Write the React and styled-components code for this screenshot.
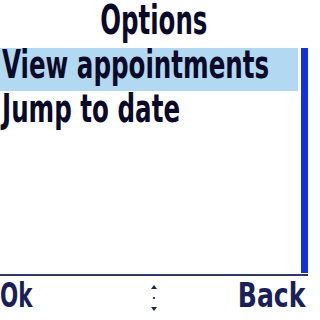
import React from 'react';
import styled, { createGlobalStyle } from 'styled-components';

const GlobalStyle = createGlobalStyle`
  html, body {
    margin: 0;
    padding: 0;
    background: #ffffff;
  }
`

const Screen = styled.div`
  width: 308px;
  height: 320px;
  display: flex;
  flex-direction: column;
  background: #ffffff;
  color: #0a0a28;
  font-family: "DejaVu Sans Condensed", "DejaVu Sans", sans-serif;
  font-weight: bold;
  white-space: nowrap;
`

// the handset font is far narrower than anything installed, so squeeze it
const Label = styled.span`
  display: inline-block;
  transform: scaleX(${props => props.squeeze || 0.7});
  transform-origin: ${props => props.origin || 'left'} center;
`

const Title = styled.div`
  height: 48px;
  box-sizing: border-box;
  padding-top: 4px;
  text-align: center;
  font-size: 40px;
  line-height: 32px;
`

const Body = styled.div`
  height: 225px;
  display: flex;
`

const List = styled.div`
  flex: 1;
  min-width: 0;
  overflow-x: clip;
  display: flex;
  flex-direction: column;
`

const Row = styled.div`
  height: 43px;
  box-sizing: border-box;
  padding: ${props => props.selected ? 1 : 2}px 0 0 2px;
  font-size: 39px;
  line-height: 32px;
  background: ${props => props.selected ? '#b2d8f2' : 'transparent'};
`

const ScrollBar = styled.div`
  flex: 0 0 7px;
  margin-left: 3px;
  background: #1232e0;
`

const Separator = styled.div`
  height: 2px;
  margin-top: 1px;
  background: #2c3a68;
`

const SoftKeys = styled.div`
  flex: 1;
  display: flex;
  align-items: flex-start;
  justify-content: space-between;
  padding-top: 3px;
  font-size: 34px;
  line-height: 32px;
  color: #18205a;
`

const Key = styled.div`
  flex: 0 0 90px;
  text-align: ${props => props.align || 'left'};
  padding-right: ${props => props.align === 'right' ? 3 : 0}px;
  box-sizing: border-box;
`

const Arrows = styled.div`
  display: flex;
  flex-direction: column;
  align-items: center;
  gap: 8px;
  padding-top: 6px;
`

const Dot = styled.div`
  width: 2px;
  height: 2px;
  background: #3a4270;
`

const Scroller = () => (
  <Arrows>
    <svg width="6" height="4" viewBox="0 0 6 4"><path d="M3 0 L6 4 L0 4 Z" fill="#1c2258" /></svg>
    <Dot />
    <svg width="6" height="4" viewBox="0 0 6 4"><path d="M0 0 L6 0 L3 4 Z" fill="#1c2258" /></svg>
  </Arrows>
)

export default function App() {
  return (
    <Screen>
      <GlobalStyle />
      <Title><Label origin="center" squeeze={0.68}>Options</Label></Title>
      <Body>
        <List>
          <Row selected><Label>View appointments</Label></Row>
          <Row><Label>Jump to date</Label></Row>
        </List>
        <ScrollBar />
      </Body>
      <Separator />
      <SoftKeys>
        <Key><Label>Ok</Label></Key>
        <Scroller />
        <Key align="right"><Label origin="right" squeeze={0.82}>Back</Label></Key>
      </SoftKeys>
    </Screen>
  );
}
